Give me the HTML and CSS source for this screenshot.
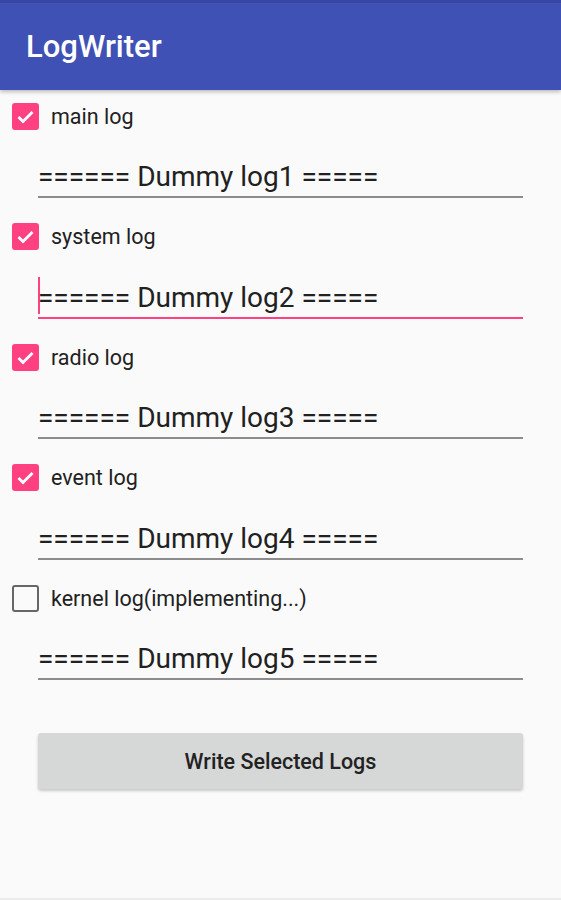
FILE: index.html
```html
<!DOCTYPE html>
<html lang="en">
<head>
    <meta charset="UTF-8">
    <meta name="viewport" content="width=device-width, initial-scale=1.0">
    <title>LogWriter</title>
    <link rel="stylesheet" href="styles.css">
</head>
<body>

    <div class="screen">
        <!-- App bar -->
        <header class="app-bar">
            <h1 class="app-title">LogWriter</h1>
        </header>

        <div class="content">
            <div class="log-list">
                <div class="log-group">
                    <div class="check-row">
                        <span class="checkbox checked">
                            <svg width="27" height="27" viewBox="0 0 27 27"><path d="M6.5 14l4.5 4.5L20.5 9" fill="none" stroke="#fff" stroke-width="2.8"/></svg>
                        </span>
                        <span class="check-label">main log</span>
                    </div>
                    <div class="log-field">====== Dummy log1 =====</div>
                </div>

                <div class="log-group">
                    <div class="check-row">
                        <span class="checkbox checked">
                            <svg width="27" height="27" viewBox="0 0 27 27"><path d="M6.5 14l4.5 4.5L20.5 9" fill="none" stroke="#fff" stroke-width="2.8"/></svg>
                        </span>
                        <span class="check-label">system log</span>
                    </div>
                    <div class="log-field focused"><span class="caret"></span>====== Dummy log2 =====</div>
                </div>

                <div class="log-group">
                    <div class="check-row">
                        <span class="checkbox checked">
                            <svg width="27" height="27" viewBox="0 0 27 27"><path d="M6.5 14l4.5 4.5L20.5 9" fill="none" stroke="#fff" stroke-width="2.8"/></svg>
                        </span>
                        <span class="check-label">radio log</span>
                    </div>
                    <div class="log-field">====== Dummy log3 =====</div>
                </div>

                <div class="log-group">
                    <div class="check-row">
                        <span class="checkbox checked">
                            <svg width="27" height="27" viewBox="0 0 27 27"><path d="M6.5 14l4.5 4.5L20.5 9" fill="none" stroke="#fff" stroke-width="2.8"/></svg>
                        </span>
                        <span class="check-label">event log</span>
                    </div>
                    <div class="log-field">====== Dummy log4 =====</div>
                </div>

                <div class="log-group">
                    <div class="check-row">
                        <span class="checkbox"></span>
                        <span class="check-label">kernel log(implementing...)</span>
                    </div>
                    <div class="log-field">====== Dummy log5 =====</div>
                </div>
            </div>

            <button class="write-btn">Write Selected Logs</button>
        </div>
    </div>

</body>
</html>
```

FILE: styles.css
```css
* {
    box-sizing: border-box;
}
body {
    margin: 0;
    font-family: Roboto, "Noto Sans", sans-serif;
    background-color: #fafafa;
    color: #212121;
}
.screen {
    height: 900px;
    border-bottom: 2px solid #ececec;
    overflow: hidden;
}
.app-bar {
    height: 90px;
    background-color: #3f51b5;
    border-top: 3px solid #3646a6;
    display: flex;
    align-items: center;
    padding-left: 26px;
    box-shadow: 0 2px 4px rgba(0,0,0,0.25);
    position: relative;
}
.app-title {
    margin: 0;
    color: #fff;
    font-size: 31px;
    font-weight: 500;
}
.content {
    padding-top: 1px;
}
.log-list {
    display: flex;
    flex-direction: column;
    gap: 13.5px;
}
.check-row {
    height: 50px;
    display: flex;
    align-items: center;
    padding-left: 12px;
}
.checkbox {
    width: 27px;
    height: 27px;
    border: 2px solid #666;
    border-radius: 3px;
    display: flex;
}
.checkbox.checked {
    border: none;
    background-color: #ff4081;
}
.check-label {
    margin-left: 12px;
    font-size: 21.5px;
    color: #212121;
}
.log-field {
    margin: 0 38px;
    height: 57px;
    border-bottom: 2px solid #8c8c8c;
    padding-bottom: 3px;
    display: flex;
    align-items: flex-end;
    font-size: 28px;
    line-height: 32px;
    white-space: pre;
}
.log-field.focused {
    border-bottom-color: #ff4081;
}
.caret {
    display: inline-block;
    width: 2px;
    height: 37px;
    margin-right: -2px;
    margin-bottom: 0;
    background-color: #ff4081;
}
.write-btn {
    display: block;
    width: 485px;
    height: 56px;
    margin: 53px 0 0 38px;
    background-color: #d6d7d7;
    border: none;
    border-radius: 3px;
    box-shadow: 0 2px 3px rgba(0,0,0,0.2);
    font-family: Roboto, "Noto Sans", sans-serif;
    font-size: 21.5px;
    font-weight: 500;
    color: #222;
}
```
